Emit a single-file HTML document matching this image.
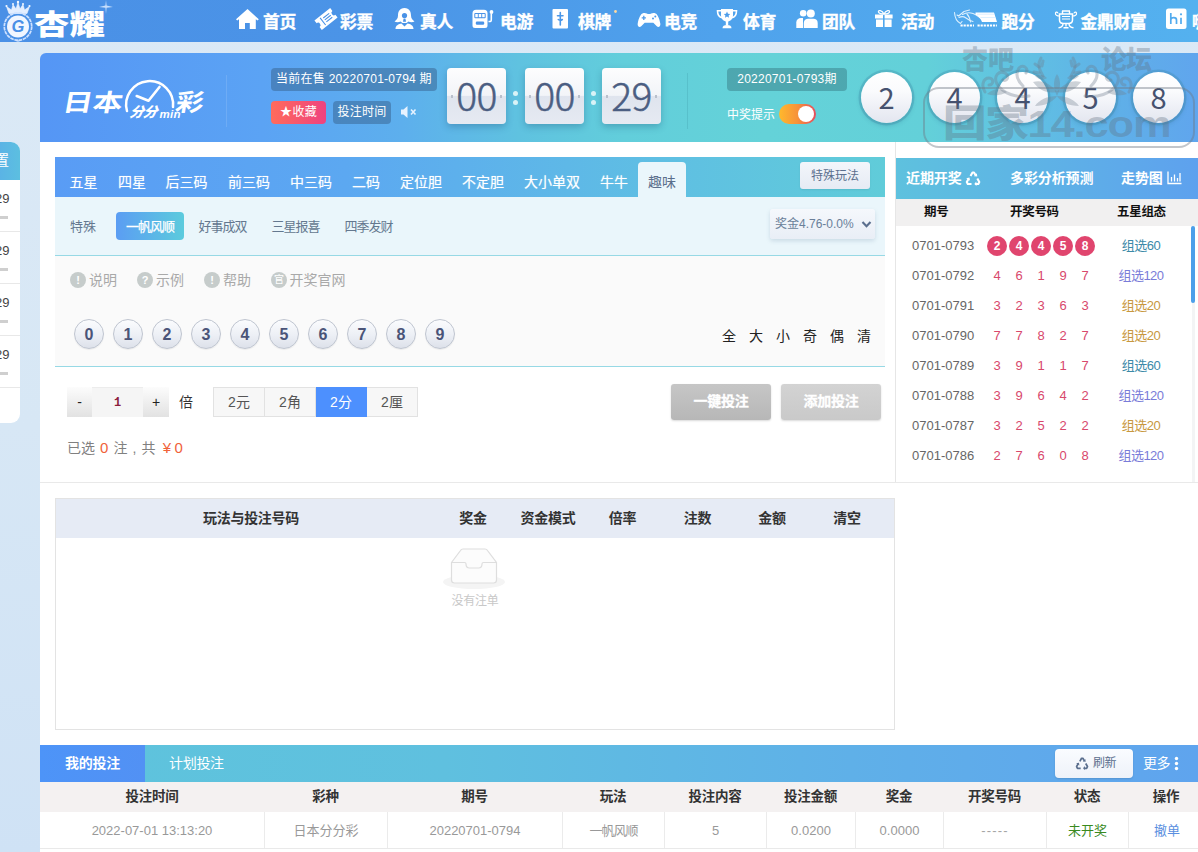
<!DOCTYPE html>
<html lang="zh-CN">
<head>
<meta charset="utf-8">
<title>日本分分彩</title>
<style>
*{box-sizing:border-box;margin:0;padding:0}
html,body{width:1198px;height:852px;overflow:hidden}
body{position:relative;background:linear-gradient(180deg,#dbe9f6 0%,#d7e7f5 50%,#cfe2f5 100%);font-family:"Liberation Sans","Noto Sans CJK SC",sans-serif;font-size:13px;color:#666;}
.abs{position:absolute}
/* NAV */

#nav{position:absolute;left:0;top:0;width:1198px;height:42px;background:linear-gradient(90deg,#4a90e6 0%,#4b94e7 30%,#4fa2ec 60%,#54b1ef 100%);overflow:hidden}
#nav .it{position:absolute;top:2px;height:42px;line-height:42px;color:#fff;font-weight:bold;font-size:16.8px;white-space:nowrap;-webkit-text-stroke:.35px #fff;letter-spacing:-.3px;margin-left:-1px}
#nav svg{position:absolute}
#logo-t{position:absolute;left:34px;top:1.500px;font-size:34px;line-height:46px;font-weight:900;color:#fff;letter-spacing:0px;white-space:nowrap;transform-origin:0 50%;transform:scale(1.045,0.85)}
/* LEFT STUB */
#lstub{position:absolute;left:-10px;top:142px;width:30px;height:281px;background:#fff;border-radius:0 9px 9px 0;overflow:hidden}
#lstub .h{position:absolute;left:0;top:0;width:30px;height:38px;background:linear-gradient(90deg,#5aaee8,#5cbfe0);color:#fff;font-size:14px;line-height:37px;white-space:nowrap}
#lstub .n{position:absolute;left:12px;font-size:13px;line-height:16px;color:#444}
#lstub .g{position:absolute;left:0;width:18px;height:3px;background:#cfcfcf}
#lstub .l{position:absolute;left:0;width:30px;height:1px;background:#e8e8e8}
/* HEADER */
#hdr{position:absolute;left:40px;top:53px;width:1168px;height:89px;border-radius:6px 0 0 0;background:linear-gradient(90deg,#5596f5 0%,#5ba3f4 19%,#5dafed 31%,#5fc2e0 41%,#62cedb 50%,#64d2d8 62%,#63d0d9 76%,#60bfe3 85%,#5fb0e8 92%,#60a4ee 100%);}

#hdr .pill{position:absolute;height:23px;line-height:23px;letter-spacing:.25px;border-radius:4px;color:#fff;font-size:12px;text-align:center;white-space:nowrap}
#hdr .card{position:absolute;top:15px;width:59px;height:56px;border-radius:4px;background:linear-gradient(180deg,#fdfdfe 0%,#f2f4f8 49%,#dfe4ee 50%,#e6eaf2 100%);box-shadow:0 3px 7px rgba(30,80,120,.32);color:#4b5e82;font-size:39px;line-height:53px;text-align:center;font-weight:300;letter-spacing:-.5px;font-family:'Noto Sans CJK SC','Liberation Sans',sans-serif;-webkit-text-stroke:.5px #4b5e82}
#hdr .card:before,#hdr .card:after{content:"";position:absolute;top:27px;width:2px;height:3px;background:#b9c0cc}
#hdr .card:before{left:4px}#hdr .card:after{right:4px}
#hdr .colon{position:absolute;width:5px;height:5px;border-radius:3px;background:#d9f3f7}
#hdr .ball{position:absolute;top:19px;width:51px;height:51px;border-radius:50%;background:linear-gradient(180deg,#ffffff 0%,#fafbfd 38%,#eceef5 75%,#e3e6ef 100%);box-shadow:0 0 0 2.5px rgba(60,135,165,.3),0 2px 5px rgba(30,80,110,.28);color:#46526f;font-size:29px;line-height:48px;text-align:center;font-family:'Noto Sans CJK SC','Liberation Sans',sans-serif;font-weight:400}

#wm{position:absolute;left:0;top:0;width:1198px;height:160px;pointer-events:none;overflow:hidden}
#wm div{position:absolute;white-space:nowrap;font-weight:900;color:rgba(96,112,128,.36)}
/* MAIN */
#main{position:absolute;left:40px;top:142px;width:856px;height:340px;background:#fff}

#tabs{position:absolute;left:15px;top:15px;width:830px;height:40px;background:linear-gradient(90deg,#599cf5 0%,#5ca8f1 35%,#5fc0e2 75%,#60ccd9 100%)}
#tabs .t{position:absolute;top:5px;height:35px;line-height:40px;padding:0 10px;font-size:14px;color:#fff;white-space:nowrap;text-shadow:0 0 1px rgba(255,255,255,.5)}
#tabs .t.on{background:#eaf6fb;color:#5a6f8c;border-radius:4px 4px 0 0;text-shadow:none}
#tabs .sp{position:absolute;left:745px;top:5px;width:70px;height:27px;line-height:28px;border-radius:3px;background:linear-gradient(180deg,#f3f6fb,#e6ebf4);color:#5b6f8e;font-size:12px;text-align:center;box-shadow:0 1px 2px rgba(0,0,0,.08)}
#sub{position:absolute;left:15px;top:55px;width:830px;height:59px;background:#eaf6fb;border-bottom:1px solid #97d9e5}
#sub .s{position:absolute;top:15px;height:28px;line-height:30px;font-size:13px;color:#64788f;white-space:nowrap}
#sub .s.on{background:linear-gradient(90deg,#5b9df3,#5ccbdd);color:#fff;-webkit-text-stroke:.25px #fff;border-radius:4px;width:68px;text-align:center}
#sel{position:absolute;left:15px;top:114px;width:830px;height:111px;background:#fafafa;border-bottom:1px solid #97d9e5}
#sel .ic{position:absolute;top:15.500px;width:16px;height:16px;border-radius:8px;background:#c6cccb;color:#fff;font-size:11px;line-height:16px;text-align:center;font-weight:bold}
#sel .tx{position:absolute;top:14px;font-size:14px;line-height:20px;color:#a9a9a9;white-space:nowrap}
#sel .nb{position:absolute;top:63px;width:30px;height:30px;border-radius:15px;border:1px solid #bfc5d0;background:linear-gradient(180deg,#fbfcfe 0%,#eceff5 55%,#dde1ea 100%);color:#4a5478;font-size:16px;font-weight:bold;line-height:30px;text-align:center;box-shadow:0 1px 1px rgba(0,0,0,.06)}
#sel .q{position:absolute;top:70px;font-size:14px;line-height:20px;color:#222}

#bet .sb{position:absolute;top:245px;height:30px;line-height:31px;text-align:center;color:#222;font-size:14px;background:linear-gradient(180deg,#fcfcfc,#e2e2e2)}
#bet .u{position:absolute;top:245px;width:51px;height:30px;line-height:29px;text-align:center;font-size:14px;color:#555;background:#f7f7f7;border:1px solid #e2e2e2;border-left-width:0}
#bet .u.on{background:#4d90fe;color:#fff;border-color:#4d90fe}
#bet .btn{position:absolute;top:242px;width:100px;height:36px;line-height:35px;border-radius:3px;color:#fff;font-size:14px;font-weight:bold;text-align:center;letter-spacing:-.2px;-webkit-text-stroke:.3px #fff;box-shadow:0 1px 2px rgba(0,0,0,.15)}

#right{position:absolute;left:895px;top:142px;width:303px;height:341px;background:#fff;border-left:1px solid #e6e6e6}
#rh{position:absolute;left:0;top:16px;width:302px;height:41px;background:linear-gradient(90deg,#5ec1de 0%,#5eb2e6 50%,#5ea1ee 100%)}
#rh .h{position:absolute;top:0;line-height:41px;font-size:14px;font-weight:bold;color:#fff;white-space:nowrap;letter-spacing:-.1px}
#rc{position:absolute;left:0;top:57px;width:302px;height:27px;background:#f1f0f0}
#rc .c{position:absolute;top:0;line-height:27px;font-size:12.500px;font-weight:bold;color:#111;white-space:nowrap;letter-spacing:-.3px}
.rr{position:absolute;left:0;width:296px;height:30px;line-height:30px;font-size:13px;color:#666;white-space:nowrap}
.rr .is{position:absolute;left:16px}
.rr .d{position:absolute;width:22px;text-align:center;color:#d8486c}
.rr .b{position:absolute;top:5px;width:20px;height:20px;border-radius:10px;background:#e0456e;color:#fff;font-size:12px;font-weight:bold;line-height:20px;text-align:center}
.rr .g{position:absolute;left:205px;width:80px;text-align:center;letter-spacing:-.5px}
.g60{color:#3c8aa8}.g120{color:#7a7cd8}.g20{color:#c8983e}


#mid{position:absolute;left:40px;top:482px;width:1158px;height:263px;background:#fff;border-top:1px solid #e9e9e9}
#ot{position:absolute;left:15px;top:15px;width:840px;height:232px;border:1px solid #e3e3e3;background:#fff}
#ot .hd{position:absolute;left:0;top:0;width:838px;height:39px;background:#e6ebf5}
#ot .hd div{position:absolute;top:0;line-height:39px;font-size:14px;font-weight:bold;color:#333;white-space:nowrap;transform:translateX(-50%);letter-spacing:-.3px}
#bot{position:absolute;left:40px;top:745px;width:1158px;height:107px;background:#fff}
#bt{position:absolute;left:0;top:0;width:1158px;height:37px;background:linear-gradient(90deg,#5ec4dc 0%,#5fc0df 35%,#5fb0e8 70%,#5fa4ee 100%)}
#bt .a{position:absolute;left:0;top:0;width:105px;height:37px;background:linear-gradient(90deg,#4d94f8,#5291f4);color:#fff;font-size:14px;font-weight:bold;line-height:37px;text-align:center;letter-spacing:-.3px}
#bh{position:absolute;left:0;top:37px;width:1158px;height:30px;background:#f4f1f1}
#bh div{position:absolute;top:0;line-height:30px;font-size:13.500px;font-weight:bold;color:#333;white-space:nowrap;transform:translateX(-50%);letter-spacing:-.2px}
#br{position:absolute;left:0;top:67px;width:1158px;height:37px;border-bottom:1px solid #e9e9e9}
#br div{position:absolute;top:0;height:36px;line-height:37px;font-size:13px;color:#999;white-space:nowrap;text-align:center;border-left:1px solid #ebebeb}
#br div:first-child{border-left:0}

</style>
</head>
<body>
<div id="nav">
<svg style="left:1px;top:0px" width="34" height="42" viewBox="0 0 34 42">
<path d="M8 13.500 L5.500 6.500 L10.500 10 L12 4.500 L15 9 L17 2.500 L19 9 L22 4.500 L23.500 10 L28.500 6.500 L26 13.500 Z" fill="#e3eeff" stroke="#f2f7ff" stroke-width=".6" stroke-linejoin="round"/>
<circle cx="5.500" cy="6" r="1.100" fill="#f4f8ff"/><circle cx="12" cy="4" r="1" fill="#f4f8ff"/><circle cx="17" cy="2" r="1.200" fill="#f4f8ff"/><circle cx="22" cy="4" r="1" fill="#f4f8ff"/><circle cx="28.500" cy="6" r="1.100" fill="#f4f8ff"/>
<circle cx="17" cy="26.500" r="13.700" fill="none" stroke="#cfe2ff" stroke-width="1.700" stroke-dasharray="3.600 0.700"/>
<circle cx="17" cy="26.500" r="11" fill="#f1f6ff"/>
<text x="17" y="32.300" text-anchor="middle" font-family="Liberation Sans, sans-serif" font-size="16.500" font-weight="bold" font-style="italic" fill="#4a8fe6">G</text>
<path d="M17 40.200 l-2.500 0.900 l2.500 0.700 l2.500 -0.700 z" fill="#cfe3ff"/>
</svg>
<div id="logo-t">杏耀</div>
<svg style="left:98px;top:0" width="16" height="14" viewBox="0 0 16 14"><path d="M8 0 L8.6 5.6 L15 7 L8.6 7.8 L8 14 L7.4 7.8 L1 7 L7.4 5.6 Z" fill="#dcebff" opacity=".85"/></svg>
<div class="it" style="left:264px">首页</div>
<div class="it" style="left:341px">彩票</div>
<div class="it" style="left:421px">真人</div>
<div class="it" style="left:501px">电游</div>
<div class="it" style="left:579px">棋牌</div>
<div class="it" style="left:665px">电竞</div>
<div class="it" style="left:744px">体育</div>
<div class="it" style="left:823px">团队</div>
<div class="it" style="left:902px">活动</div>
<div class="it" style="left:1002.5px">跑分</div>
<div class="it" style="left:1081.5px">金鼎财富</div>
<div class="it" style="left:1193px">嗨聊</div>

<!-- home -->
<svg style="left:235px;top:8px" width="24" height="22" viewBox="0 0 24 22"><path d="M12.500 1 L1 11.300 L2.200 12.600 L4 11.200 V21 H10 V15 H14.800 V21 H20.800 V11.200 L22.600 12.600 L23.800 11.300 Z" fill="#fff"/></svg>
<!-- ticket -->
<svg style="left:314px;top:7px" width="24" height="24" viewBox="0 0 24 24"><g transform="rotate(-38 12 12)"><path d="M2 6 H22 V9.6 A2.4 2.4 0 0 0 22 14.4 V18 H2 V14.4 A2.4 2.4 0 0 0 2 9.6 Z" fill="#fff"/><path d="M8 7.5 V16.5 M10.5 9.5 H18 M10.5 12 H18 M10.5 14.5 H18" stroke="#4a91e6" stroke-width="1.1" fill="none"/></g></svg>
<!-- dealer -->
<svg style="left:393px;top:7px" width="23" height="23" viewBox="0 0 23 23"><path d="M11.5 1 C6.5 1 5 5 5 8.5 C5 11.5 3.5 13 1.5 14.5 C3.5 15.5 6 15.3 7.5 14.5 L9.5 16 L13.5 16 L15.5 14.5 C17 15.3 19.500 15.500 21.500 14.500 C19.500 13 18 11.500 18 8.500 C18 5 16.500 1 11.500 1 Z" fill="#fff"/><circle cx="11.5" cy="8.5" r="2.6" fill="#4a92e6"/><path d="M10.6 11.5 h1.8 l0.6 3.2 h-3 z" fill="#4a92e6"/><path d="M2.500 22 C2.500 18.500 5.500 17 8.500 16.500 L11.500 19.500 L14.500 16.500 C17.500 17 20.500 18.500 20.500 22 Z" fill="#fff"/></svg>
<!-- slot -->
<svg style="left:472px;top:9px" width="22" height="20" viewBox="0 0 22 20"><path d="M4 0.800 H12 A3.500 3.500 0 0 1 15.500 4.300 V16.500 A2.500 2.500 0 0 1 13 19 H3 A2.500 2.500 0 0 1 0.500 16.500 V4.300 A3.500 3.500 0 0 1 4 0.800 Z" fill="#fff"/><rect x="2.300" y="4" width="11.400" height="5.200" rx="1" fill="#4a93e7"/><rect x="3.300" y="5" width="2.500" height="3.200" fill="#fff"/><rect x="6.750" y="5" width="2.500" height="3.200" fill="#fff"/><rect x="10.200" y="5" width="2.500" height="3.200" fill="#fff"/><rect x="3.800" y="12.600" width="8.400" height="3.200" rx="1.200" fill="#4a93e7"/><path d="M16.500 12.500 H18.300 C19.300 12.500 19.300 11 19.300 10 V4.500" stroke="#fff" stroke-width="1.600" fill="none"/><circle cx="19.500" cy="3" r="1.900" fill="#fff"/></svg>
<!-- card -->
<svg style="left:552px;top:9px" width="17" height="20" viewBox="0 0 17 20"><rect x="0.500" y="0" width="15.500" height="19.500" rx="1" fill="#fff"/><path d="M8.300 3.500 V16 M5.500 6.800 H11 M6.300 10.500 C7.500 11.500 9 11.500 10.300 10.500" stroke="#4b97e8" stroke-width="1.600" fill="none" stroke-linecap="round"/></svg>
<svg style="left:613px;top:9px" width="5" height="5" viewBox="0 0 5 5"><circle cx="2.500" cy="2.500" r="1.400" fill="#ffd9a0"/></svg>
<!-- gamepad -->
<svg style="left:637px;top:12px" width="24" height="16" viewBox="0 0 24 16"><path d="M6.500 1 C9 0.500 10 2 12 2 C14 2 15 0.500 17.500 1 C20.500 1.600 22.200 6 23.300 11.500 C23.800 14.500 21.500 15.800 19.800 14.300 L16.300 10.800 H7.700 L4.200 14.300 C2.500 15.800 0.200 14.500 0.700 11.500 C1.800 6 3.500 1.600 6.500 1 Z" fill="#fff"/><path d="M6.800 3.800 V8 M4.700 5.900 H8.900" stroke="#4c9ae9" stroke-width="1.300"/><circle cx="16" cy="6.600" r="1" fill="#4c9ae9"/><circle cx="18.300" cy="4.600" r="1" fill="#4c9ae9"/></svg>
<!-- trophy -->
<svg style="left:716px;top:8px" width="22" height="21" viewBox="0 0 22 21"><path d="M5 1 H17 V7 C17 11 14.500 13.500 11 13.500 C7.500 13.500 5 11 5 7 Z" fill="#fff"/><path d="M5 2.800 H1.500 C1.500 7 3 9.300 6.300 9.800 M17 2.800 H20.500 C20.500 7 19 9.300 15.700 9.800" stroke="#fff" stroke-width="1.600" fill="none"/><rect x="9.800" y="13" width="2.400" height="4" fill="#fff"/><path d="M6.500 20.300 C6.500 18 8 17 11 17 C14 17 15.500 18 15.500 20.300 Z" fill="#fff"/><path d="M11 3.600 l1 2.100 2.200 0.300 -1.600 1.500 0.400 2.200 -2 -1.100 -2 1.100 0.400 -2.200 -1.600 -1.500 2.200 -0.300 z" fill="#4d9dea"/></svg>
<!-- team -->
<svg style="left:796px;top:9px" width="22" height="20" viewBox="0 0 22 20"><circle cx="7.200" cy="4.300" r="3.300" fill="#fff"/><path d="M0.300 19 V13.500 C0.300 10.500 2.500 9 5 9 H7 V19 Z" fill="#fff"/><circle cx="14.800" cy="4.600" r="4" fill="#fff" stroke="#4e9fea" stroke-width="0"/><path d="M7.800 19 V14 C7.800 11 10 9.800 12 9.800 H17.500 C19.800 9.800 21.700 11 21.700 14 V19 Z" fill="#fff"/></svg>
<!-- gift -->
<svg style="left:874px;top:8px" width="20" height="20" viewBox="0 0 20 20"><path d="M10 6 C8 1.500 4 2 4.500 4 C5 5.700 8 6 10 6 C12 6 15 5.700 15.500 4 C16 2 12 1.500 10 6 Z" fill="none" stroke="#fff" stroke-width="1.300"/><rect x="1" y="6.500" width="8" height="4" fill="#fff"/><rect x="10.600" y="6.500" width="8" height="4" fill="#fff"/><rect x="2" y="11.500" width="7" height="7.500" fill="#fff"/><rect x="10.600" y="11.500" width="7" height="7.500" fill="#fff"/></svg>
<!-- rhino -->
<svg style="left:953px;top:9px" width="45" height="19" viewBox="0 0 45 19"><g fill="none" stroke="#e4f4ff" stroke-width="1.100" stroke-linecap="round" stroke-linejoin="round" opacity=".95"><path d="M1.500 3.500 C1.800 8.500 3.500 12.500 7.500 14.500 L9 12.500"/><path d="M4 6 L5.500 7 L11 2.500 L16.500 1 "/><path d="M9.500 5.500 C13 3.500 17 3.500 20 4.500 C23 5.500 25 7.500 27.500 9"/><path d="M6 8.500 C8 7.500 11 7.500 13 9 C15 10.500 17 12 20 12.500"/><path d="M14 5 C16 7 17 10 17.500 13"/></g><path d="M22.500 3.500 H41 L44 13 H29 C28 10 25.500 7 22.500 5.500 Z" fill="#fff"/><path d="M24 5.200 H41.500 M27.500 8.500 H42.500" stroke="#cfeaff" stroke-width=".7"/><path d="M7.500 16.500 H21 M24.500 16.500 H44" stroke="#fff" stroke-width="2" stroke-dasharray="2.200 0.900"/></svg>
<!-- ding -->
<svg style="left:1054px;top:10px" width="24" height="19" viewBox="0 0 24 19"><path d="M8 1 H16 M8.500 1 V4 M15.500 1 V4" stroke="#fff" stroke-width="1.400" fill="none"/><path d="M5.500 4 H18.500 V10 C18.500 12.500 16.500 13.500 14.500 13.500 H9.500 C7.500 13.500 5.500 12.500 5.500 10 Z" fill="none" stroke="#fff" stroke-width="1.500"/><path d="M8 6.500 H16 M8 9 H16" stroke="#fff" stroke-width="1.100"/><path d="M5.500 6 C3 6 1 5 1.500 3 C2 1.500 4 2 3.800 3.400 M18.500 6 C21 6 23 5 22.500 3 C22 1.500 20 2 20.200 3.400" stroke="#fff" stroke-width="1.200" fill="none"/><path d="M9 13.500 C9 16 7 17.500 4.500 17.800 M15 13.500 C15 16 17 17.500 19.500 17.800 M12 13.500 V16.500 M9.500 17.800 H14.500" stroke="#fff" stroke-width="1.400" fill="none"/></svg>
<!-- hi -->
<svg style="left:1166px;top:8px" width="21" height="22" viewBox="0 0 21 22"><rect x="0" y="0.500" width="20.500" height="20.500" rx="2.500" fill="#fff"/><path d="M4.800 5 V16 M4.800 11.500 C5.500 9 10.500 9 10.500 12 V16 M15 9.800 V16" stroke="#52abee" stroke-width="1.700" fill="none"/><circle cx="15" cy="6.300" r="1.100" fill="#52abee"/></svg>

</div>
<div id="lstub"><div class="h"><span style="position:absolute;left:5px">置</span></div><div class="n" style="left:5px;top:49px">29</div><div class="g" style="top:74px"></div><div class="l" style="top:89px"></div><div class="n" style="left:5px;top:101px">29</div><div class="g" style="top:126px"></div><div class="l" style="top:141px"></div><div class="n" style="left:5px;top:153px">29</div><div class="g" style="top:178px"></div><div class="l" style="top:193px"></div><div class="n" style="left:5px;top:205px">29</div><div class="g" style="top:230px"></div><div class="l" style="top:245px"></div></div>
<div id="hdr">
<!-- lottery logo -->
<div id="lotlogo">
<span class="abs" style="left:23px;top:32.500px;font-size:24px;line-height:34px;color:#fff;font-weight:700;letter-spacing:0;transform-origin:0 50%;transform:skewX(-10deg) scaleX(1.25);white-space:nowrap">日本</span>
<svg class="abs" style="left:80px;top:20px" width="66" height="50" viewBox="0 0 66 50">
<path d="M7 38 A23.500 23.500 0 1 1 53 34" fill="none" stroke="#fff" stroke-width="2.500" stroke-linecap="round"/>
<path d="M16.700 23 L28.500 27.800 L39.500 14" fill="none" stroke="#fff" stroke-width="2.600" stroke-linecap="round" stroke-linejoin="round"/>
<text x="9" y="44.500" font-size="14" font-weight="900" font-style="italic" fill="#fff" font-family="Liberation Sans, Noto Sans CJK SC, sans-serif" letter-spacing="-0.500" transform="skewX(-10)" style="transform-origin:9px 44px">分分</text>
<text x="39.500" y="45" font-size="11.500" font-weight="bold" font-style="italic" fill="#fff" font-family="Liberation Sans, sans-serif" letter-spacing="0.300">min</text>
</svg>
<span class="abs" style="left:136px;top:32.500px;font-size:24px;line-height:34px;color:#fff;font-weight:700;transform-origin:0 50%;transform:skewX(-10deg) scaleX(1.16);white-space:nowrap">彩</span>
</div>
<div class="abs" style="left:186px;top:22px;width:1px;height:52px;background:rgba(255,255,255,.12)"></div>
<div class="pill" style="left:231px;top:15px;width:166px;background:rgba(58,104,150,.55)">当前在售 20220701-0794 期</div>
<div class="pill" style="left:231px;top:48px;width:55px;background:linear-gradient(90deg,#ff6b5b,#ef4280)"><span style="font-size:12px">★</span>收藏</div>
<div class="pill" style="left:293px;top:48px;width:58px;background:rgba(58,104,150,.55)">投注时间</div>
<svg class="abs" style="left:360px;top:52px" width="18" height="14" viewBox="0 0 18 14"><path d="M1 4.500 H3.500 L7.500 1 V13 L3.500 9.500 H1 Z" fill="#e6f2ff"/><path d="M11 4.500 L15.500 9.500 M15.500 4.500 L11 9.500" stroke="#e6f2ff" stroke-width="1.600"/></svg>
<div class="card" style="left:407px">00</div>
<div class="colon" style="left:473px;top:37.500px"></div><div class="colon" style="left:473px;top:46.500px"></div>
<div class="card" style="left:485px">00</div>
<div class="colon" style="left:550.500px;top:37.500px"></div><div class="colon" style="left:550.500px;top:46.500px"></div>
<div class="card" style="left:562px">29</div>
<div class="abs" style="left:647px;top:20px;width:1px;height:56px;background:rgba(40,120,140,.18)"></div>
<div class="pill" style="left:687px;top:15px;width:120px;background:rgba(64,140,150,.62)">20220701-0793期</div>
<div class="abs" style="left:687px;top:54px;font-size:12px;line-height:16px;color:#fff;white-space:nowrap">中奖提示</div>
<div class="abs" style="left:739px;top:51px;width:37px;height:20px;border-radius:10px;background:linear-gradient(90deg,#ffb92c 0%,#f7923a 50%,#e64c5e 100%)"><div class="abs" style="right:2px;top:2px;width:16px;height:16px;border-radius:8px;background:#fff"></div></div>
<div class="ball" style="left:821px">2</div>
<div class="ball" style="left:889px">4</div>
<div class="ball" style="left:957px">4</div>
<div class="ball" style="left:1025px">5</div>
<div class="ball" style="left:1093px">8</div>
</div>
<div id="main">
<div id="tabs">
<div class="t" style="left:4.5px">五星</div><div class="t" style="left:53px">四星</div><div class="t" style="left:100.5px">后三码</div><div class="t" style="left:163px">前三码</div><div class="t" style="left:225px">中三码</div><div class="t" style="left:287px">二码</div><div class="t" style="left:335px">定位胆</div><div class="t" style="left:397px">不定胆</div><div class="t" style="left:459px">大小单双</div><div class="t" style="left:535px">牛牛</div><div class="t on" style="left:583px">趣味</div>
<div class="sp">特殊玩法</div>
</div>
<div id="sub">
<div class="s" style="left:15px">特殊</div>
<div class="s on" style="left:61px;letter-spacing:-1px">一帆风顺</div>
<div class="s" style="left:143.500px;letter-spacing:-1px">好事成双</div>
<div class="s" style="left:216.500px;letter-spacing:-1px">三星报喜</div>
<div class="s" style="left:289.500px;letter-spacing:-1px">四季发财</div>
<div class="abs" style="left:715px;top:12px;width:105px;height:30px;border-radius:3px;background:linear-gradient(180deg,#f5f8fc,#e9eef6);box-shadow:0 2px 4px rgba(60,100,140,.18);font-size:12px;line-height:31px;color:#6a7f99;padding-left:5px;white-space:nowrap">奖金4.76-0.0%<svg class="abs" style="right:3px;top:11px" width="11" height="9" viewBox="0 0 11 9"><path d="M1.500 2 L5.500 6.300 L9.500 2" fill="none" stroke="#5b6f8e" stroke-width="2.100"/></svg></div>
</div>
<div id="sel">
<div class="ic" style="left:15px">!</div><div class="tx" style="left:34px">说明</div>
<div class="ic" style="left:82px">?</div><div class="tx" style="left:101px">示例</div>
<div class="ic" style="left:149px">!</div><div class="tx" style="left:168px">帮助</div>
<div class="ic" style="left:216px;font-size:10px;font-weight:normal">官</div><div class="tx" style="left:234.500px">开奖官网</div>
<div class="nb" style="left:19px">0</div><div class="nb" style="left:58px">1</div><div class="nb" style="left:97px">2</div><div class="nb" style="left:136px">3</div><div class="nb" style="left:175px">4</div><div class="nb" style="left:214px">5</div><div class="nb" style="left:253px">6</div><div class="nb" style="left:292px">7</div><div class="nb" style="left:331px">8</div><div class="nb" style="left:370px">9</div><div class="q" style="left:667px">全</div><div class="q" style="left:694px">大</div><div class="q" style="left:721px">小</div><div class="q" style="left:748px">奇</div><div class="q" style="left:775px">偶</div><div class="q" style="left:802px">清</div>
</div>
<div id="bet">
<div class="sb" style="left:27px;width:25px">-</div>
<div class="abs" style="left:52px;top:245px;width:51px;height:30px;background:#f5f5f5;border-top:1px solid #ececec;color:#8c1c3c;font-size:12px;font-weight:bold;line-height:31px;text-align:center;font-family:'Liberation Mono',monospace">1</div>
<div class="sb" style="left:103px;width:26px">+</div>
<div class="abs" style="left:139px;top:250px;font-size:14px;line-height:20px;color:#333">倍</div>
<div class="u" style="left:173px;border-left-width:1px;width:52px">2元</div><div class="u" style="left:225px">2角</div><div class="u on" style="left:276px">2分</div><div class="u" style="left:327px">2厘</div>
<div class="btn" style="left:631px;background:linear-gradient(180deg,#c6c6c6,#b7b7b7)">一键投注</div>
<div class="btn" style="left:741px;background:linear-gradient(180deg,#d3d3d3,#c9c9c9)">添加投注</div>
<div class="abs" style="left:27px;top:296px;font-size:14px;line-height:20px;color:#808080;white-space:nowrap;word-spacing:1.200px">已选 <span style="color:#f0623a;font-size:15px">0</span> 注 , 共 <span style="color:#f0623a;font-size:15px;letter-spacing:3.500px;margin-left:2px">¥0</span></div>
</div>
</div>
<div id="right">
<div id="rh"><div class="h" style="left:10px">近期开奖</div>
<svg class="abs" style="left:69px;top:13px" width="16" height="15" viewBox="0 0 16 15"><g fill="none" stroke="#fff" stroke-width="2.100" stroke-linejoin="round"><path d="M5.500 5 L7.500 1.500 H9 L10.800 4.500"/><path d="M12.300 7.500 L14.300 11 L13.300 13 H10"/><path d="M6.500 13 H2.800 L1.800 11 L3.500 8"/></g><path d="M9 5.200 L12.300 5.400 L11.800 2.200 Z M11.300 10.500 L9.300 13 L11.500 15 Z M1.200 7.300 L4.500 6.500 L5 9.800 Z" fill="#fff"/></svg>
<div class="h" style="left:114px">多彩分析预测</div>
<div class="h" style="left:225px">走势图</div>
<svg class="abs" style="left:271px;top:13px" width="15" height="14" viewBox="0 0 15 14"><path d="M1 0.500 V12.500 H14.500" fill="none" stroke="#fff" stroke-width="1.300"/><path d="M4.500 6 V10.500 M7.500 3.500 V10.500 M10.500 7 V10.500 M13 2 V10.500" stroke="#fff" stroke-width="1.300"/></svg>
</div>
<div id="rc"><div class="c" style="left:28px">期号</div><div class="c" style="left:114px">开奖号码</div><div class="c" style="left:221px">五星组态</div></div>
<div class="rr" style="top:89px"><span class="is">0701-0793</span><span class="b" style="left:91px">2</span><span class="b" style="left:113px">4</span><span class="b" style="left:135px">4</span><span class="b" style="left:157px">5</span><span class="b" style="left:179px">8</span><span class="g g60">组选60</span></div>
<div class="rr" style="top:119px"><span class="is">0701-0792</span><span class="d" style="left:90px">4</span><span class="d" style="left:112px">6</span><span class="d" style="left:134px">1</span><span class="d" style="left:156px">9</span><span class="d" style="left:178px">7</span><span class="g g120">组选120</span></div>
<div class="rr" style="top:149px"><span class="is">0701-0791</span><span class="d" style="left:90px">3</span><span class="d" style="left:112px">2</span><span class="d" style="left:134px">3</span><span class="d" style="left:156px">6</span><span class="d" style="left:178px">3</span><span class="g g20">组选20</span></div>
<div class="rr" style="top:179px"><span class="is">0701-0790</span><span class="d" style="left:90px">7</span><span class="d" style="left:112px">7</span><span class="d" style="left:134px">8</span><span class="d" style="left:156px">2</span><span class="d" style="left:178px">7</span><span class="g g20">组选20</span></div>
<div class="rr" style="top:209px"><span class="is">0701-0789</span><span class="d" style="left:90px">3</span><span class="d" style="left:112px">9</span><span class="d" style="left:134px">1</span><span class="d" style="left:156px">1</span><span class="d" style="left:178px">7</span><span class="g g60">组选60</span></div>
<div class="rr" style="top:239px"><span class="is">0701-0788</span><span class="d" style="left:90px">3</span><span class="d" style="left:112px">9</span><span class="d" style="left:134px">6</span><span class="d" style="left:156px">4</span><span class="d" style="left:178px">2</span><span class="g g120">组选120</span></div>
<div class="rr" style="top:269px"><span class="is">0701-0787</span><span class="d" style="left:90px">3</span><span class="d" style="left:112px">2</span><span class="d" style="left:134px">5</span><span class="d" style="left:156px">2</span><span class="d" style="left:178px">2</span><span class="g g20">组选20</span></div>
<div class="rr" style="top:299px"><span class="is">0701-0786</span><span class="d" style="left:90px">2</span><span class="d" style="left:112px">7</span><span class="d" style="left:134px">6</span><span class="d" style="left:156px">0</span><span class="d" style="left:178px">8</span><span class="g g120">组选120</span></div>
<div class="abs" style="left:296px;top:84px;width:3px;height:256px;background:#f3f4f5"></div><div class="abs" style="left:295px;top:84px;width:4px;height:77px;border-radius:2px;background:#4c9fea"></div>
</div>
<div id="mid">
<div id="ot"><div class="hd"><div style="left:195px">玩法与投注号码</div><div style="left:417px">奖金</div><div style="left:492px">资金模式</div><div style="left:566.500px">倍率</div><div style="left:641.500px">注数</div><div style="left:716px">金额</div><div style="left:791px">清空</div></div>
<svg class="abs" style="left:386px;top:46px" width="64" height="46" viewBox="0 0 64 46"><ellipse cx="32" cy="37" rx="31" ry="7" fill="#f4f4f4"/><path d="M9.500 17.500 L18.500 5.500 C19 4.500 20 4 21 4 H43 C44 4 45 4.500 45.500 5.500 L54.500 17.500 V35 C54.500 36.700 53.200 38 51.500 38 H12.500 C10.800 38 9.500 36.700 9.500 35 Z" fill="#fcfcfc" stroke="#dedede" stroke-width="1.200"/><path d="M9.500 17.500 H22.500 C23.500 17.500 24 18.200 24 19 C24 21.500 25.500 23 27.500 23 H36.500 C38.500 23 40 21.500 40 19 C40 18.200 40.500 17.500 41.500 17.500 H54.500" fill="none" stroke="#dedede" stroke-width="1.200"/></svg>
<div class="abs" style="left:369px;top:94px;width:100px;text-align:center;font-size:12px;line-height:16px;color:#c8c8c8;letter-spacing:-.2px">没有注单</div>
</div>
</div>
<div id="wm">
<div style="left:962px;top:42px;font-size:26px;line-height:36px;letter-spacing:0">杏吧</div>
<div style="left:1101px;top:42px;font-size:26px;line-height:36px;letter-spacing:-1px">论坛</div>
<svg class="abs" style="left:977px;top:52px" width="160" height="58" viewBox="0 0 160 58"><g fill="none" stroke="rgba(110,125,140,.36)" stroke-width="3" stroke-linecap="round">
<path d="M64 6 C60 12 62 18 66 24 M96 6 C100 12 98 18 94 24"/>
<path d="M58 12 l4 3 M57 20 l5 1 M102 12 l-4 3 M103 20 l-5 1 M66 9 l-1 5 M94 9 l1 5"/>
<path d="M52 44 C40 46 26 42 20 32 C16 24 22 18 28 21 C33 24 30 30 26 28"/>
<path d="M108 44 C120 46 134 42 140 32 C144 24 138 18 132 21 C127 24 130 30 134 28"/>
<path d="M46 34 C40 28 38 22 42 16 C46 12 52 16 49 21 M114 34 C120 28 122 22 118 16 C114 12 108 16 111 21"/>
<path d="M8 40 C4 34 6 26 12 26 C17 26 17 33 12 33 M152 40 C156 34 154 26 148 26 C143 26 143 33 148 33"/>
</g><g fill="rgba(110,125,140,.34)">
<path d="M80 22 C76 28 76 36 80 44 C84 36 84 28 80 22 Z"/>
<path d="M80 40 C72 30 64 28 56 30 C62 38 70 42 80 40 Z M80 40 C88 30 96 28 104 30 C98 38 90 42 80 40 Z"/>
<path d="M80 44 C70 44 62 48 58 54 C68 54 76 50 80 44 Z M80 44 C90 44 98 48 102 54 C92 54 84 50 80 44 Z"/>
<path d="M70 26 C66 22 62 22 58 24 C62 28 66 29 70 26 Z M90 26 C94 22 98 22 102 24 C98 28 94 29 90 26 Z"/>
<path d="M30 40 C24 44 16 44 10 42 C16 36 24 36 30 40 Z M130 40 C136 44 144 44 150 42 C144 36 136 36 130 40 Z"/>
</g></svg>
<div style="left:923px;top:87px;width:272px;height:61px;border:2px solid rgba(110,120,130,.42);border-radius:16px"></div>
<div style="left:943px;top:99.500px;font-size:37px;line-height:50px;letter-spacing:-1px;font-family:'Liberation Sans','Noto Sans CJK SC',sans-serif;transform-origin:0 50%;transform:scaleX(1.175)">回家14.com</div>
</div>
<div id="bot">
<div id="bt"><div class="a">我的投注</div><div class="abs" style="left:129px;top:0;line-height:37px;font-size:14px;color:#fff;white-space:nowrap;letter-spacing:-.3px">计划投注</div>
<div class="abs" style="left:1015px;top:4px;width:78px;height:29px;border-radius:4px;background:linear-gradient(180deg,#fafcff,#eef2f9);box-shadow:0 1px 2px rgba(0,0,0,.12);color:#5b6f8e;font-size:12px;line-height:29px;padding-left:38px;letter-spacing:-.5px">刷新<svg class="abs" style="left:20px;top:8px" width="14" height="13" viewBox="0 0 16 15"><g fill="none" stroke="#5b6f8e" stroke-width="2" stroke-linejoin="round"><path d="M5.500 5 L7.500 1.500 H9 L10.800 4.500"/><path d="M12.300 7.500 L14.300 11 L13.300 13 H10"/><path d="M6.500 13 H2.800 L1.800 11 L3.500 8"/></g><path d="M9 5.200 L12.300 5.400 L11.800 2.200 Z M11.300 10.500 L9.300 13 L11.500 15 Z M1.200 7.300 L4.500 6.500 L5 9.800 Z" fill="#5b6f8e"/></svg></div>
<div class="abs" style="left:1103px;top:0;line-height:37px;font-size:14px;color:#fff;white-space:nowrap;letter-spacing:-.5px">更多</div>
<svg class="abs" style="left:1134px;top:11px" width="5" height="15" viewBox="0 0 5 15"><circle cx="2.500" cy="2.500" r="1.700" fill="#fff"/><circle cx="2.500" cy="7.500" r="1.700" fill="#fff"/><circle cx="2.500" cy="12.500" r="1.700" fill="#fff"/></svg>
</div>
<div id="bh"><div style="left:112px">投注时间</div><div style="left:285.5px">彩种</div><div style="left:434.5px">期号</div><div style="left:573px">玩法</div><div style="left:675px">投注内容</div><div style="left:770.5px">投注金额</div><div style="left:859px">奖金</div><div style="left:954.5px">开奖号码</div><div style="left:1047px">状态</div><div style="left:1126px">操作</div></div>
<div id="br"><div style="left:0px;width:224px;">2022-07-01 13:13:20</div><div style="left:224px;width:123px;">日本分分彩</div><div style="left:347px;width:175px;">20220701-0794</div><div style="left:522px;width:102px;letter-spacing:-1px">一帆风顺</div><div style="left:624px;width:102px;">5</div><div style="left:726px;width:89px;">0.0200</div><div style="left:815px;width:88px;">0.0000</div><div style="left:903px;width:103px;color:#a5a5a5;letter-spacing:1.200px">-----</div><div style="left:1006px;width:82px;color:#3a8a1e">未开奖</div><div style="left:1088px;width:77px;color:#5b8fe0">撤单</div></div>
</div>
</body>
</html>
